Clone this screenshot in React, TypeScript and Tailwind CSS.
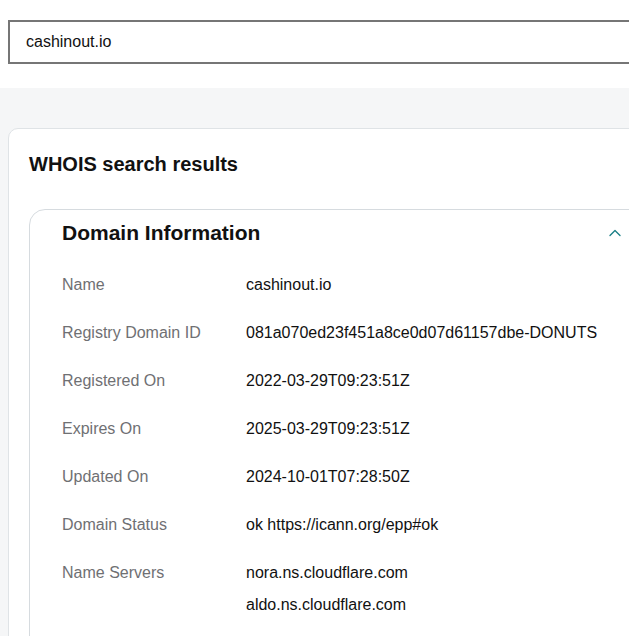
import { ChevronUp } from 'lucide-react';

interface WhoisRow {
  label: string;
  values: string[];
}

const rows: WhoisRow[] = [
  { label: 'Name', values: ['cashinout.io'] },
  { label: 'Registry Domain ID', values: ['081a070ed23f451a8ce0d07d61157dbe-DONUTS'] },
  { label: 'Registered On', values: ['2022-03-29T09:23:51Z'] },
  { label: 'Expires On', values: ['2025-03-29T09:23:51Z'] },
  { label: 'Updated On', values: ['2024-10-01T07:28:50Z'] },
  { label: 'Domain Status', values: ['ok https://icann.org/epp#ok'] },
  { label: 'Name Servers', values: ['nora.ns.cloudflare.com', 'aldo.ns.cloudflare.com'] },
];

export default function App() {
  return (
    <div className="w-[629px] h-[636px] overflow-hidden bg-white font-['Liberation_Sans',Arial,sans-serif] text-[#111111]">
      <div className="w-[700px]">
        {/* search box */}
        <div className="pt-5 pl-2 pb-6">
          <div className="h-[44px] border-2 border-[#767676] bg-white pl-4 flex items-center text-[16px]">
            cashinout.io
          </div>
        </div>

        <div className="bg-[#f5f6f7] pt-10 pl-2 h-[600px]">
          <div className="w-[682px] bg-white border border-[#dfe3e6] rounded-[10px] pt-[21px] px-5 pb-6">
            <h2 className="text-[20px] leading-7 font-bold">WHOIS search results</h2>

            <div className="mt-[31px] w-[632px] border border-[#d6dbdf] rounded-2xl">
              <div className="flex items-center justify-between pl-8 pr-[35px] pt-[9px] pb-[14px]">
                <span className="text-[21px] leading-7 font-bold">Domain Information</span>
                <ChevronUp size={20} strokeWidth={1.6} className="text-[#1b7f86]" />
              </div>

              <div className="px-8 pb-16">
                {rows.map((row) => (
                  <div key={row.label} className="grid grid-cols-[184px_1fr] py-3 text-[16px] leading-6">
                    <div className="text-[#6f7073]">{row.label}</div>
                    <div className="flex flex-col gap-2">
                      {row.values.map((v) => (
                        <span key={v}>{v}</span>
                      ))}
                    </div>
                  </div>
                ))}
              </div>
            </div>
          </div>
        </div>
      </div>
    </div>
  );
}
